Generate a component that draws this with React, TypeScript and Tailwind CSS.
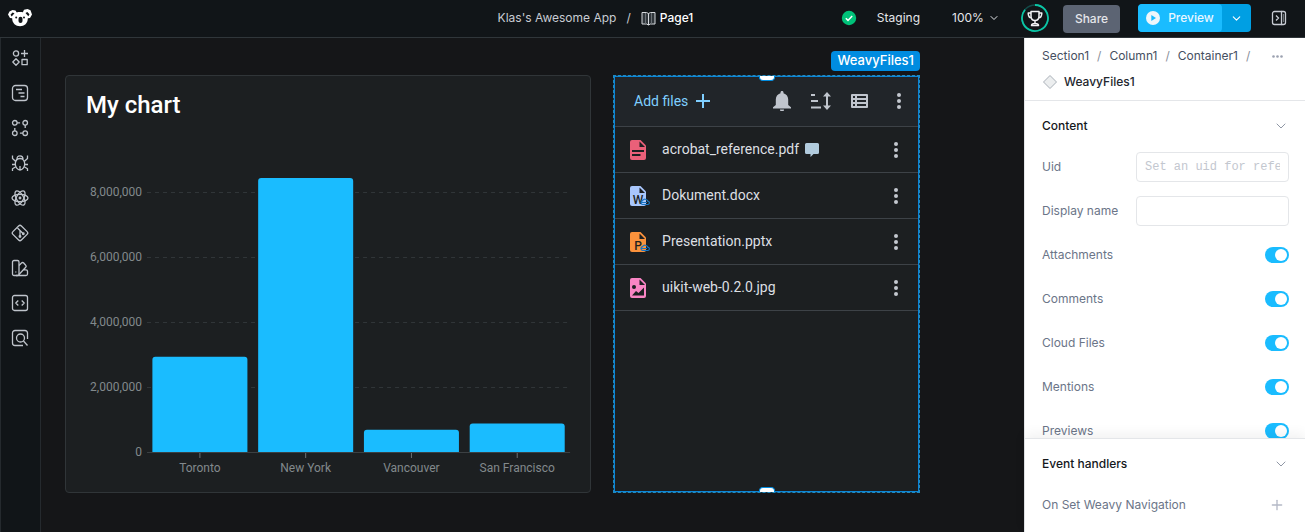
import { ChevronDown, Plus } from 'lucide-react'
import { ReactNode } from 'react'

type FileKind = 'pdf' | 'word' | 'slides' | 'image'

const railItems: { label: string; icon: ReactNode }[] = [
  {
    label: 'Components',
    icon: (
      <>
        <circle cx="5" cy="4.5" r="2.6" />
        <path d="M13.5 1v7M10 4.5h7M5 9.8 8.2 13 5 16.2 1.8 13zM11 10.5h5.2v5.2H11z" />
      </>
    ),
  },
  {
    label: 'Pages',
    icon: (
      <>
        <rect x="1.5" y="1.5" width="15" height="15" rx="3" />
        <path d="M5 5.5h6M7.5 9h6M9.5 12.5h4" />
      </>
    ),
  },
  {
    label: 'Workflows',
    icon: (
      <>
        <circle cx="3.8" cy="3.8" r="2.3" />
        <circle cx="14.2" cy="3.8" r="2.3" />
        <circle cx="3.8" cy="14.2" r="2.3" />
        <circle cx="14.2" cy="14.2" r="2.3" />
        <path d="M6.1 3.8h3M14.2 6.1v3M11.9 14.2h-3M3.8 11.9v-3" />
      </>
    ),
  },
  {
    label: 'Debugger',
    icon: (
      <>
        <path d="M9 4.5c3 0 4.7 2.5 4.7 5.5S11.5 16 9 16s-4.7-3-4.7-6S6 4.5 9 4.5zM6 5c0-2 1-3.2 3-3.2S12 3 12 5M9 12v4" />
        <path d="M1.5 1.5v3L4.8 7.500M16.5 1.5v3l-3.300 3M1 10.500h3.300M17 10.500h-3.300M1.500 17v-2.200l3.300-2M16.500 17v-2.200l-3.300-2" />
      </>
    ),
  },
  {
    label: 'Custom code',
    icon: (
      <>
        <ellipse cx="9" cy="9" rx="8" ry="3.6" />
        <ellipse cx="9" cy="9" rx="8" ry="3.6" transform="rotate(60 9 9)" />
        <ellipse cx="9" cy="9" rx="8" ry="3.6" transform="rotate(120 9 9)" />
        <circle cx="9" cy="9" r="0.8" />
      </>
    ),
  },
  {
    label: 'Version control',
    icon: (
      <>
        <rect x="3" y="3" width="12" height="12" rx="2" transform="rotate(45 9 9)" />
        <path d="M6.5 4 9 6.5V13M9 6.5l3.5 3.5" />
        <circle cx="9" cy="12.5" r="0.8" />
        <circle cx="12.3" cy="9.7" r="0.8" />
      </>
    ),
  },
  {
    label: 'Theme',
    icon: (
      <>
        <rect x="1.5" y="1.5" width="6.500" height="15" rx="1.5" />
        <path d="M8 6.5 10.5 4a1.5 1.5 0 0 1 2.2 0l2 2.2a1.5 1.5 0 0 1 0 2.1L8 15.5M12.5 10.8H15a1.5 1.5 0 0 1 1.5 1.5V15a1.5 1.5 0 0 1-1.5 1.500H5M4.800 12.500v1" />
      </>
    ),
  },
  {
    label: 'Scripts',
    icon: (
      <>
        <rect x="1.5" y="1.5" width="15" height="15" rx="2" />
        <path d="M7.300 6.500 4.800 9l2.500 2.500M10.700 6.500 13.200 9l-2.500 2.500" />
      </>
    ),
  },
  {
    label: 'Inspect',
    icon: (
      <>
        <path d="M16.5 10V4A2.5 2.5 0 0 0 14 1.5H4A2.5 2.5 0 0 0 1.5 4v10A2.5 2.5 0 0 0 4 16.5h8" />
        <circle cx="9.5" cy="9" r="4" />
        <path d="m12.500 12 4 4.500" />
      </>
    ),
  },
]

const cities = [
  { name: 'Toronto', population: 2930000 },
  { name: 'New York', population: 8430000 },
  { name: 'Vancouver', population: 690000 },
  { name: 'San Francisco', population: 880000 },
]

const files: { name: string; kind: FileKind; commented?: boolean }[] = [
  { name: 'acrobat_reference.pdf', kind: 'pdf', commented: true },
  { name: 'Dokument.docx', kind: 'word' },
  { name: 'Presentation.pptx', kind: 'slides' },
  { name: 'uikit-web-0.2.0.jpg', kind: 'image' },
]

const toggles = ['Attachments', 'Comments', 'Cloud Files', 'Mentions', 'Previews']

const Koala = () => (
  <svg width="24" height="18" viewBox="0 0 24 18" aria-hidden="true">
    <g fill="#fff">
      <path d="M0 5.500 1.500 2.500 4.500 1l3 .500L9 4 6 9.500l-4-.500zM24 5.500l-1.500-4.200L19.500 0l-3.500.800L14.500 4 18 9.500l4-.500z" />
      <path d="M12 3c5 0 7.800 2.500 7.800 6.800 0 4.500-3.500 7.400-7.800 7.400s-7.800-2.900-7.800-7.400C4.200 5.500 7 3 12 3z" />
    </g>
    <g fill="#111518">
      <path d="M2.500 5.800 4.500 3.500l2 .700-2.800 3.300zM21.500 5.300 19.300 3l-1.800.900 2.800 3.300z" />
      <circle cx="8.200" cy="8.500" r="1" />
      <circle cx="16" cy="8.500" r="1" />
      <rect x="10.500" y="7.800" width="4" height="6.200" rx="2" />
    </g>
  </svg>
)

const Trophy = () => (
  <svg width="28" height="28" viewBox="0 0 28 28" fill="none" aria-hidden="true">
    <circle cx="14" cy="14" r="13" stroke="#134a48" strokeWidth="1.5" />
    <path d="M14 1A13 13 0 1 1 4 5.700" stroke="#0bc5a5" strokeWidth="1.8" />
    <path
      d="M10 7.500h8v4.500c0 2.500-1.500 4.500-4 4.500s-4-2-4-4.500zM10 9H7.200c0 3 1 4.800 3.300 5M18 9h2.800c0 3-1 4.800-3.300 5M14 16.500v3M10.500 21.500c0-1.300 1-2 3.500-2s3.500.700 3.500 2z"
      stroke="#f1f3f5"
      strokeWidth="1.5"
      strokeLinejoin="round"
    />
  </svg>
)

const Header = () => (
  <header className="flex h-[38px] shrink-0 items-center border-b border-[#30363a] bg-[#111518] pb-px text-[12px] text-[#c8ccd3]">
    <a href="#home" aria-label="Home" className="pl-2">
      <Koala />
    </a>
    <nav className="flex min-w-0 flex-1 items-center justify-center gap-2.5 pl-[318px]">
      <a href="#app">Klas's Awesome App</a>
      <span>/</span>
      <a href="#page" className="flex items-center gap-1 font-medium text-white">
        <svg width="15" height="15" viewBox="0 0 15 15" fill="none" stroke="#d5d8dc" aria-hidden="true">
          <path d="M1 1.500h4.500l2 1 2-1H14v11.500H9.500l-2 1-2-1H1z" fill="#30363b" />
          <path d="M7.500 2.500V14" />
          <path d="M4.500 2v11M10.500 2v11" stroke="#6b7176" />
        </svg>
        Page1
      </a>
    </nav>
    <div className="flex shrink-0 items-center pr-[18px]">
      <svg width="16" height="16" viewBox="0 0 16 16" fill="none" aria-hidden="true">
        <circle cx="8" cy="8" r="7.2" fill="#00c279" />
        <path d="m4.800 8.200 2.200 2.200 4.200-4.300" stroke="#fff" strokeWidth="1.5" />
      </svg>
      <button className="ml-5 text-[#e4e6ea]">Staging</button>
      <label className="ml-8 flex items-center gap-1 text-[#e4e6ea]">
        <select aria-label="Zoom" className="appearance-none bg-transparent">
          <option>100%</option>
        </select>
        <ChevronDown size={12} strokeWidth={2} />
      </label>
      <button aria-label="Achievements" className="ml-[21px]">
        <Trophy />
      </button>
      <button className="mt-0.5 ml-3.5 h-7 w-[57px] rounded bg-[#5c6473] font-medium text-[#e4e6ea]">Share</button>
      <div className="ml-[18px] flex h-7 overflow-hidden rounded bg-[#009fe3]">
        <button className="flex w-21 items-center justify-center gap-2 rounded bg-[#1abcff] font-medium text-[#eaf7ff]">
          <svg width="14" height="14" viewBox="0 0 14 14" aria-hidden="true">
            <circle cx="7" cy="7" r="7" fill="#eef6fb" />
            <path d="M5.300 4v6L10 7z" fill="#1abcff" />
          </svg>
          Preview
        </button>
        <button aria-label="Preview options" className="flex w-[29px] items-center justify-center text-white">
          <ChevronDown size={13} strokeWidth={2} />
        </button>
      </div>
      <button aria-label="Toggle panel" className="ml-5">
        <svg width="16" height="16" viewBox="0 0 16 16" fill="none" stroke="#c8ccd3" strokeWidth="1.3" aria-hidden="true">
          <path d="M10.500 1.500h-7a2 2 0 0 0-2 2v9a2 2 0 0 0 2 2h7zM5 5.500 7.500 8 5 10.500" />
          <path d="M10.500 1.500h2a2 2 0 0 1 2 2v9a2 2 0 0 1-2 2h-2" />
          <path d="M12.500 4v8" stroke="#6b7176" />
        </svg>
      </button>
    </div>
  </header>
)

const Rail = () => (
  <nav className="flex w-[41px] shrink-0 flex-col items-center gap-[17px] border-x border-[#252a2e] bg-[#111518] pt-[11px] pr-px">
    {railItems.map((item) => (
      <button key={item.label} aria-label={item.label}>
        <svg
          width="18"
          height="18"
          viewBox="0 0 18 18"
          fill="none"
          stroke="#bfc4cb"
          strokeWidth="1.3"
          strokeLinejoin="round"
          aria-hidden="true"
        >
          {item.icon}
        </svg>
      </button>
    ))}
  </nav>
)

const CHART = { left: 81, right: 504, base: 331, perMillion: 32.5, bar: 95 }

const Chart = () => {
  const band = (CHART.right - CHART.left) / cities.length
  const toY = (value: number) => CHART.base - (value / 1000000) * CHART.perMillion

  return (
    <svg
      viewBox="0 0 524 370"
      role="img"
      aria-label="Population by city"
      className="w-full font-['Roboto',sans-serif] text-[12px]"
    >
      {[8000000, 6000000, 4000000, 2000000, 0].map((tick) => (
        <g key={tick}>
          <path
            d={`M${CHART.left} ${toY(tick) + 0.5}H${CHART.right}`}
            stroke={tick === 0 ? '#3b4043' : '#303538'}
            strokeDasharray={tick === 0 ? undefined : '4 4'}
          />
          <text x="76" y={toY(tick) + 4} textAnchor="end" fill="#82898c">
            {tick.toLocaleString('en-US')}
          </text>
        </g>
      ))}
      {cities.map((city, i) => {
        const center = CHART.left + band * (i + 0.5)
        const x = center - CHART.bar / 2
        const top = toY(city.population)
        return (
          <g key={city.name}>
            <path
              d={`M${x} ${CHART.base}V${top + 3}q0-3 3-3h${CHART.bar - 6}q3 0 3 3V${CHART.base}z`}
              fill="#1abcff"
            />
            <path d={`M${center} ${CHART.base + 1}v5`} stroke="#6b7174" />
            <text x={center} y={CHART.base + 20} textAnchor="middle" fill="#82898c">
              {city.name}
            </text>
          </g>
        )
      })}
    </svg>
  )
}

const fileColors: Record<FileKind, string> = {
  pdf: '#ea6079',
  word: '#a9c7fc',
  slides: '#fb923c',
  image: '#f985c4',
}

const FileIcon = ({ kind }: { kind: FileKind }) => (
  <svg width="20" height="20" viewBox="0 0 20 20" aria-hidden="true">
    <path d="M2 0h8.500L16 5.500V18a2 2 0 0 1-2 2H2a2 2 0 0 1-2-2V2a2 2 0 0 1 2-2z" fill={fileColors[kind]} />
    <path d="M9.500 1.500V7H15z" fill="#1c1f21" />
    {kind === 'pdf' && <path d="M2 11h12M2 15h8.500" stroke="#1c1f21" strokeWidth="1.8" />}
    {kind === 'image' && (
      <>
        <circle cx="4" cy="9" r="2" fill="#1c1f21" />
        <path d="M2 17.500 6 13l2.500 2L14 9.500v8z" fill="#1c1f21" />
      </>
    )}
    {(kind === 'word' || kind === 'slides') && (
      <>
        <text
          x="8"
          y="17.5"
          textAnchor="middle"
          fill="#1c1f21"
          className="font-['Roboto',sans-serif] text-[12px] font-medium"
        >
          {kind === 'word' ? 'W' : 'P'}
        </text>
        <path
          d="M12.500 18.500a2 2 0 0 1 0-3.900 3 3 0 0 1 5.300.500 1.700 1.700 0 0 1-.300 3.400zM11 16.500h6"
          fill="none"
          stroke="#1976c5"
          strokeWidth="1.2"
        />
      </>
    )}
  </svg>
)

const Dots = () => (
  <svg width="4" height="16" viewBox="0 0 4 16" fill="#c3c8cf" aria-hidden="true">
    <circle cx="2" cy="2" r="2" />
    <circle cx="2" cy="8" r="2" />
    <circle cx="2" cy="14" r="2" />
  </svg>
)

const FileToolbar = () => (
  <div className="flex h-[50px] items-center border-b border-[#3d4247] bg-[#212529] pr-[17px] pb-px pl-[19px]">
    <button className="flex items-center gap-2 text-[14px] text-[#7fcfff]">
      Add files
      <svg width="14" height="14" viewBox="0 0 14 14" stroke="#7fcfff" strokeWidth="2" aria-hidden="true">
        <path d="M7 0v14M0 7h14" />
      </svg>
    </button>
    <div className="ml-auto flex items-center">
      <button aria-label="Notifications">
        <svg width="18" height="20" viewBox="0 0 18 20" fill="#c0c5cd" aria-hidden="true">
          <path d="M9 0c1 0 1.500.700 1.500 1.500v.700C13.500 3 15.200 5.500 15.200 8.500V14l2.800 2.300V17.500H0v-1.200L2.800 14V8.500c0-3 1.700-5.500 4.700-6.300v-.700C7.500.700 8 0 9 0zM7 18.500h4a2 2 0 0 1-4 0z" />
        </svg>
      </button>
      <button aria-label="Sort" className="ml-5">
        <svg width="20" height="18" viewBox="0 0 20 18" aria-hidden="true">
          <path d="M0 3h4M0 9h7M0 15.500h10M16 3v12" stroke="#c0c5cd" strokeWidth="2" />
          <path d="m16 0 4 4.500h-8zM16 18l4-4.500h-8z" fill="#c0c5cd" />
        </svg>
      </button>
      <button aria-label="List view" className="ml-5">
        <svg width="17" height="14" viewBox="0 0 17 14" aria-hidden="true">
          <rect width="17" height="14" rx="1" fill="#c0c5cd" />
          <path d="M2 2h2v2H2zM6 2h9v2H6zM2 6h2v2H2zM6 6h9v2H6zM2 10h2v2H2zM6 10h9v2H6z" fill="#212529" />
        </svg>
      </button>
      <button aria-label="More options" className="ml-[29px]">
        <Dots />
      </button>
    </div>
  </div>
)

const FilesWidget = () => (
  <section className="relative border border-dashed border-[#2289bd] bg-[#16384b] font-['Roboto',sans-serif]">
    <div className="h-full border border-[#0b86d8] bg-[#1c1f21]">
      <FileToolbar />
      <ul>
        {files.map((file) => (
          <li key={file.name} className="flex h-[46px] items-center border-b border-[#3d4247] pr-5 pl-[15px]">
            <FileIcon kind={file.kind} />
            <span className="ml-3 text-[14px] text-[#dcdfe3]">{file.name}</span>
            {file.commented && (
              <svg width="14" height="14" viewBox="0 0 14 14" className="ml-1.5" aria-label="Has comments">
                <path
                  d="M1.500 0h11A1.500 1.500 0 0 1 14 1.500v8a1.500 1.500 0 0 1-1.500 1.500H8.500L5.500 14v-3h-4A1.500 1.500 0 0 1 0 9.500v-8A1.500 1.500 0 0 1 1.500 0z"
                  fill="#b1cbdd"
                />
              </svg>
            )}
            <button aria-label={`Options for ${file.name}`} className="ml-auto">
              <Dots />
            </button>
          </li>
        ))}
      </ul>
    </div>
    <span className="absolute -top-[25px] -right-px flex h-5 items-center rounded-sm bg-[#008ce0] px-1.5 font-['Inter',sans-serif] text-[13px] font-medium text-white">
      WeavyFiles1
    </span>
    <span className="absolute top-0 left-1/2 h-[5px] w-4 -translate-x-1/2 rounded-b-sm border border-t-0 border-[#008ce0] bg-white" />
    <span className="absolute bottom-0 left-1/2 h-[5px] w-4 -translate-x-1/2 rounded-t-sm border border-b-0 border-[#008ce0] bg-white" />
  </section>
)

const Inspector = () => (
  <aside className="flex w-[281px] shrink-0 flex-col border-l border-[#e4e6e9] bg-white text-[12px] text-[#6b7588]">
    <div className="flex h-[63px] shrink-0 flex-col gap-1.5 border-b border-[#e4e6e9] pt-2 pr-[22px] pl-[17px] leading-5">
      <nav className="flex items-center gap-2 text-[#454f61]">
        <a href="#section">Section1</a>
        <span className="text-[#8a909b]">/</span>
        <a href="#column">Column1</a>
        <span className="text-[#8a909b]">/</span>
        <a href="#container">Container1</a>
        <span className="text-[#8a909b]">/</span>
        <button aria-label="More" className="ml-auto">
          <svg width="11" height="3" viewBox="0 0 11 3" fill="#9ba1b0" aria-hidden="true">
            <circle cx="1.5" cy="1.5" r="1.3" />
            <circle cx="5.5" cy="1.5" r="1.3" />
            <circle cx="9.5" cy="1.5" r="1.3" />
          </svg>
        </button>
      </nav>
      <div className="flex items-center gap-1.5 font-medium text-[#23272e]">
        <svg width="16" height="16" viewBox="0 0 16 16" aria-hidden="true">
          <path d="M8 1.500 14.500 8 8 14.500 1.500 8z" fill="#eceeef" stroke="#a9b0b8" />
        </svg>
        WeavyFiles1
      </div>
    </div>
    <section className="min-h-0 flex-1 overflow-hidden pr-4 pl-[17px]">
      <h2 className="flex h-[50px] items-center justify-between font-medium text-[#15181c]">
        Content
        <ChevronDown size={16} strokeWidth={1.5} color="#9097a5" />
      </h2>
      <div className="mt-px flex flex-col gap-3.5">
        <label className="flex h-[30px] items-center justify-between">
          Uid
          <input
            type="text"
            placeholder="Set an uid for reference"
            className="h-[30px] w-[153px] rounded border border-[#e4e6e9] px-2 font-['Liberation_Mono',monospace] text-[12px] placeholder:text-[#c3c7cf]"
          />
        </label>
        <label className="flex h-[30px] items-center justify-between">
          Display name
          <input type="text" className="h-[30px] w-[153px] rounded border border-[#e4e6e9] px-2" />
        </label>
        {toggles.map((name) => (
          <label key={name} className="flex h-[30px] shrink-0 items-center justify-between">
            {name}
            <input
              type="checkbox"
              role="switch"
              defaultChecked
              className="flex h-4 w-6 appearance-none items-center justify-start rounded-full bg-[#c3c7cf] px-0.5 before:size-3 before:rounded-full before:bg-white checked:justify-end checked:bg-[#1abcff]"
            />
          </label>
        ))}
      </div>
    </section>
    <section className="h-[94px] shrink-0 border-t border-[#e4e6e9] pr-4 pl-[17px] shadow-[0_-4px_12px_rgba(0,0,0,0.06)]">
      <h2 className="flex h-[50px] items-center justify-between font-medium text-[#15181c]">
        Event handlers
        <ChevronDown size={16} strokeWidth={1.5} color="#9097a5" />
      </h2>
      <div className="flex h-8 items-center justify-between pr-1">
        On Set Weavy Navigation
        <button aria-label="Add handler">
          <Plus size={16} strokeWidth={2} color="#b4b9c6" />
        </button>
      </div>
    </section>
  </aside>
)

const App = () => (
  <div className="flex h-screen flex-col overflow-hidden bg-[#151618] font-['Inter',sans-serif]">
    <Header />
    <div className="flex min-h-0 flex-1">
      <Rail />
      <main className="grid min-w-0 flex-1 grid-cols-[12fr_7fr] gap-[22px] pt-[37px] pr-[104px] pb-[39px] pl-6">
        <section className="overflow-hidden rounded border border-[#303538] bg-[#1c1f21]">
          <h1 className="px-5 pt-[13px] font-['Roboto',sans-serif] text-2xl font-medium text-white">My chart</h1>
          <Chart />
        </section>
        <FilesWidget />
      </main>
      <Inspector />
    </div>
  </div>
)

export default App
